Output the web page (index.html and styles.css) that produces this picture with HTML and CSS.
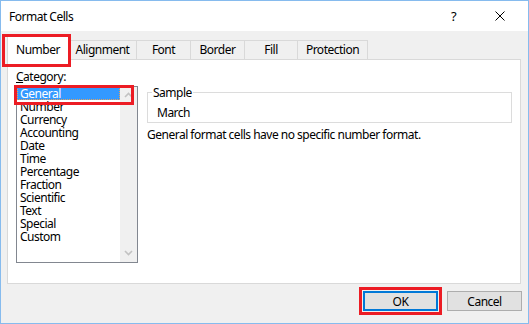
FILE: index.html
```html
<!DOCTYPE html>
<html lang="en">
<head>
  <meta charset="UTF-8" />
  <title>Format Cells</title>
  <link rel="stylesheet" href="styles.css">
</head>
<body>

  <div class="window">
    <div class="titlebar">
      <span class="title">Format Cells</span>
      <span class="help">?</span>
      <span class="close">
        <svg width="10" height="10" viewBox="0 0 10 10"><path d="M0.5 0.5 L9.5 9.5 M9.5 0.5 L0.5 9.5" stroke="#000" stroke-width="1" fill="none"/></svg>
      </span>
    </div>

    <div class="dialog-body">
      <div class="tabs">
        <div class="tab active marked">Number</div>
        <div class="tab tab-alignment">Alignment</div>
        <div class="tab tab-font">Font</div>
        <div class="tab tab-border">Border</div>
        <div class="tab tab-fill">Fill</div>
        <div class="tab tab-protection">Protection</div>
      </div>

      <div class="panel">
        <div class="category">
          <div class="label"><u>C</u>ategory:</div>
          <div class="listbox">
            <ul class="items">
              <li class="selected">General</li>
              <li>Number</li>
              <li>Currency</li>
              <li>Accounting</li>
              <li>Date</li>
              <li>Time</li>
              <li>Percentage</li>
              <li>Fraction</li>
              <li>Scientific</li>
              <li>Text</li>
              <li>Special</li>
              <li>Custom</li>
            </ul>
            <div class="scrollbar">
              <svg width="9" height="6" viewBox="0 0 9 6"><path d="M1 5 L4.5 1.5 L8 5" stroke="#c2c2c2" stroke-width="1.6" fill="none"/></svg>
              <svg width="9" height="6" viewBox="0 0 9 6"><path d="M1 1 L4.5 4.5 L8 1" stroke="#c2c2c2" stroke-width="1.6" fill="none"/></svg>
            </div>
            <div class="mark-general"></div>
          </div>
        </div>

        <div class="details">
          <fieldset class="sample">
            <legend>Sample</legend>
            <div class="sample-value">March</div>
          </fieldset>
          <p class="description">General format cells have no specific number format.</p>
        </div>
      </div>

      <div class="buttons">
        <button class="btn btn-ok">OK</button>
        <button class="btn">Cancel</button>
      </div>
    </div>
  </div>

</body>
</html>
```

FILE: styles.css
```css
body {
  margin: 0;
  font-family: "Noto Sans", Arial, sans-serif;
  font-size: 12px;
  letter-spacing: -0.5px;
  color: #000;
  background-color: #fff;
}

.window {
  width: 529px;
  height: 324px;
  box-sizing: border-box;
  border: 1px solid #86bbee;
  background-color: #f0f0f0;
  display: flex;
  flex-direction: column;
}

.titlebar {
  height: 30px;
  background-color: #fff;
  display: flex;
  align-items: center;
  padding-left: 8px;
}

.title {
  flex: 1;
}

.help {
  width: 10px;
  margin-right: 34px;
  font-size: 13px;
}

.close {
  display: flex;
  margin-right: 23px;
}

.dialog-body {
  flex: 1;
  padding: 9px 7px 0 6px;
}

/* tabs */
.tabs {
  display: flex;
  align-items: flex-end;
  height: 19px;
}

.tab {
  position: relative;
  box-sizing: border-box;
  height: 19px;
  line-height: 18px;
  text-align: center;
  border: 1px solid #d9d9d9;
  border-bottom: none;
  background-color: #f0f0f0;
  margin-left: -1px;
}

.tab.active {
  width: 62px;
  height: 24px;
  margin-left: 0;
  margin-bottom: -1px;
  padding-top: 4px;
  background-color: #fff;
  z-index: 1;
}

.tab-alignment { width: 69px; }
.tab-font { width: 55px; }
.tab-border { width: 55px; }
.tab-fill { width: 54px; }
.tab-protection { width: 71px; }

/* red annotation boxes */
.marked::after,
.mark-general {
  content: "";
  position: absolute;
  border: 3px solid #ec1c24;
  pointer-events: none;
}

.marked::after {
  left: -6px;
  right: -3px;
  top: -3px;
  bottom: -7px;
}

.mark-general {
  left: -3px;
  top: -2px;
  width: 114px;
  height: 14px;
}

/* panel */
.panel {
  box-sizing: border-box;
  height: 225px;
  border: 1px solid #d9d9d9;
  background-color: #fff;
  padding: 9px 8px;
  display: flex;
}

.label {
  line-height: 15px;
  margin-bottom: 2px;
}

.listbox {
  position: relative;
  box-sizing: border-box;
  width: 122px;
  height: 177px;
  border: 1px solid #828790;
  display: flex;
}

.items {
  list-style: none;
  margin: 0;
  padding: 0;
  width: 103px;
}

.items li {
  box-sizing: border-box;
  height: 13px;
  line-height: 13px;
  padding-left: 3px;
}

.items li.selected {
  background-color: #3399ff;
  color: #fff;
  border: 1px dotted #e2a15c;
  padding-left: 2px;
  line-height: 11px;
}

.scrollbar {
  width: 17px;
  background-color: #f0f0f0;
  display: flex;
  flex-direction: column;
  justify-content: space-between;
  align-items: center;
  padding: 5px 0 6px;
  box-sizing: border-box;
}

.details {
  flex: 1;
  margin-left: 9px;
  margin-top: 16px;
}

.sample {
  margin: 0;
  padding: 0 4px 2px;
  border: 1px solid #dcdcdc;
  min-width: 0;
}

.sample legend {
  padding: 0 1px;
  line-height: 15px;
}

.sample-value {
  line-height: 15px;
  padding: 5px 0 0 5px;
}

.description {
  margin: 4px 0 0;
  line-height: 15px;
}

/* buttons */
.buttons {
  display: flex;
  justify-content: flex-end;
  gap: 9px;
  margin-top: 7px;
  margin-right: -1px;
}

.btn {
  width: 75px;
  height: 20px;
  box-sizing: border-box;
  border: 1px solid #adadad;
  background-color: #e1e1e1;
  font-family: inherit;
  font-size: 12px;
  letter-spacing: inherit;
  padding: 0;
  color: #000;
}

.btn-ok {
  border-color: #0078d7;
  box-shadow: inset 0 0 0 1px #0078d7;
  outline: 3px solid #ec1c24;
  outline-offset: 1px;
}
```
